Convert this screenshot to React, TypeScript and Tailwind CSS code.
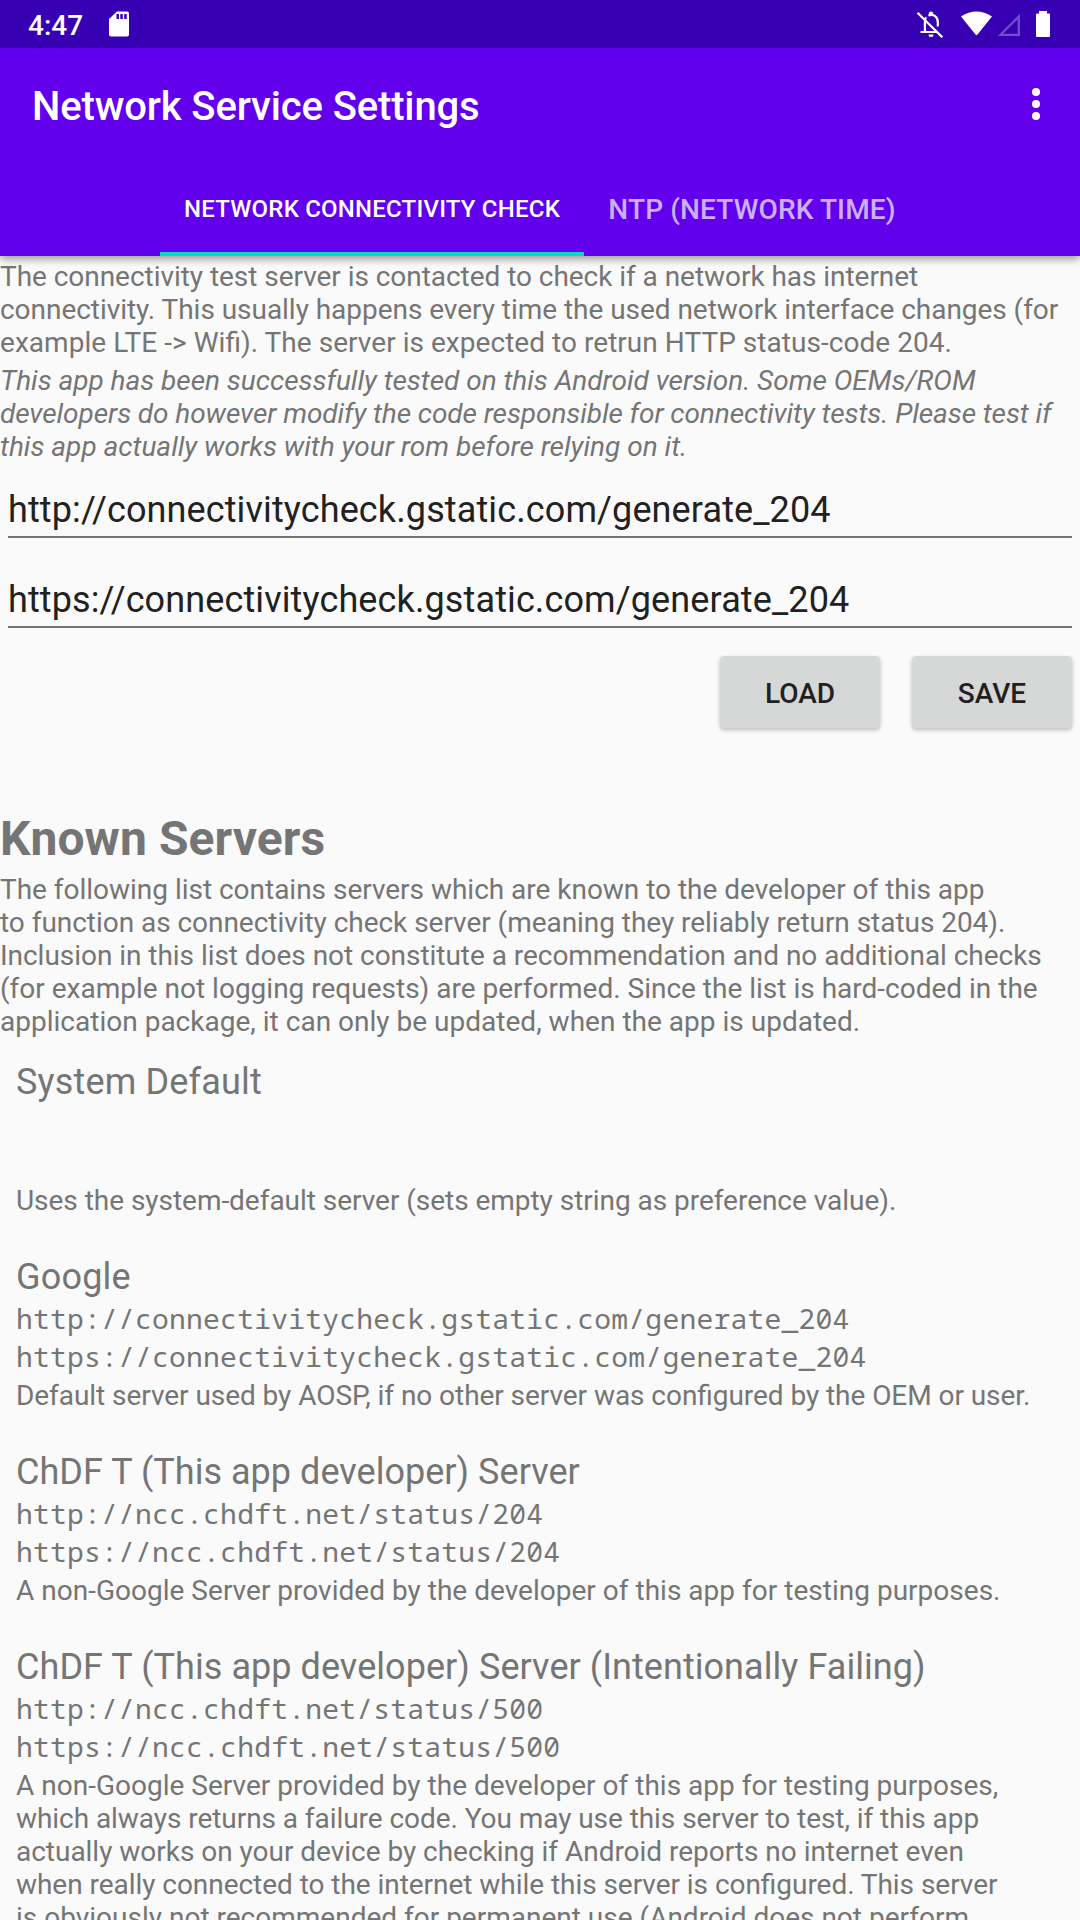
import React from "react";

type Line = [text: string, tracking: string];

function Lines({ t }: { t: Line[] }) {
  return (
    <>
      {t.map(([s, tracking]) => (
        <div key={s} className={`whitespace-pre ${tracking}`}>{s}</div>
      ))}
    </>
  );
}

type Entry = { name: Line; urls: string[]; desc: Line[] };

const servers: Entry[] = [
  {
    name: ["System Default", "tracking-[0.17px]"],
    urls: [],
    desc: [["Uses the system-default server (sets empty string as preference value).", "tracking-[-0.035px]"]],
  },
  {
    name: ["Google", "tracking-[0.2px]"],
    urls: ["http://connectivitycheck.gstatic.com/generate_204", "https://connectivitycheck.gstatic.com/generate_204"],
    desc: [["Default server used by AOSP, if no other server was configured by the OEM or user.", "tracking-[-0.055px]"]],
  },
  {
    name: ["ChDF T (This app developer) Server", "tracking-[0.03px]"],
    urls: ["http://ncc.chdft.net/status/204", "https://ncc.chdft.net/status/204"],
    desc: [["A non-Google Server provided by the developer of this app for testing purposes.", "tracking-[0.015px]"]],
  },
  {
    name: ["ChDF T (This app developer) Server (Intentionally Failing)", "tracking-[0.06px]"],
    urls: ["http://ncc.chdft.net/status/500", "https://ncc.chdft.net/status/500"],
    desc: [
      ["A non-Google Server provided by the developer of this app for testing purposes,", "tracking-[0.01px]"],
      ["which always returns a failure code. You may use this server to test, if this app", "tracking-[-0.06px]"],
      ["actually works on your device by checking if Android reports no internet even", "tracking-[-0.025px]"],
      ["when really connected to the internet while this server is configured. This server", "tracking-[-0.045px]"],
      ["is obviously not recommended for permanent use (Android does not perform", "tracking-normal"],
    ],
  },
];

function Server({ name, urls, desc }: Entry) {
  return (
    <section className="px-4 pb-[39px]">
      <h2 className="text-[36px] leading-[43px]">
        <Lines t={[name]} />
      </h2>
      <div className="h-[76px] font-['Noto_Sans_Mono','DejaVu_Sans_Mono',monospace] text-[28px] leading-[38px]">
        <Lines t={urls.map((u): Line => [u, "tracking-[0.21px]"])} />
      </div>
      <div className="pt-1">
        <Lines t={desc} />
      </div>
    </section>
  );
}

function Field({ value }: { value: string }) {
  return (
    <div className="mx-2 h-[90px]">
      <div className="h-[49px] whitespace-pre border-b-2 border-[#757575] text-[36px] leading-[42px] tracking-[0.12px] text-[#212121]">{value}</div>
    </div>
  );
}

function Button({ label }: { label: string }) {
  return (
    <button className="h-[72px] w-40 rounded-[4px] bg-[#d6d7d7] pt-0.5 text-[28px] font-medium text-[#212121] shadow-[0_2px_4px_rgba(0,0,0,0.25)]">
      {label}
    </button>
  );
}

function StatusIcons() {
  return (
    <svg width="160" height="48" viewBox="0 0 160 48" className="shrink-0 overflow-visible">
      <g fill="none" stroke="white" strokeWidth="2.2">
        <path d="M0.5 32H18M4.900 32V22C4.900 20 5.300 18.500 6 17.300M8.500 15.600C13.500 13.500 17.800 17 17.800 22V26.500" />
        <path d="M-2.500 12.800L22.300 37.200" />
      </g>
      <path d="M8.800 15.500V13.700a2.200 2.200 0 0 1 4.400 0V15.500ZM8.500 34.500h5a2.500 2.500 0 0 1-5 0Z" fill="white" />
      <path d="M41 16.500Q56.500 6.500 72 16.500L57.500 34.500Q56.500 36 55.500 34.500Z" fill="white" />
      <path d="M80.500 34.800H98.800V16.500Z" fill="none" stroke="white" strokeOpacity="0.3" strokeWidth="2.300" />
      <path d="M119 11h8v2.500h2a1 1 0 0 1 1 1V36a1 1 0 0 1-1 1h-12a1 1 0 0 1-1-1V14.500a1 1 0 0 1 1-1h2Z" fill="white" />
    </svg>
  );
}

export default function App() {
  return (
    <div className="h-[1920px] w-[1080px] overflow-hidden bg-[#fafafa] font-[Roboto,sans-serif] text-[28px] leading-[33px] text-[#757575] [font-feature-settings:'liga'_1]">
      <header className="relative h-[256px] bg-[#6200ee] text-white shadow-[0_3px_8px_rgba(0,0,0,0.4)]">
        <div className="flex h-12 items-center justify-between bg-[#3700b3] pl-7">
          <div className="flex items-center">
            <span className="pt-0.5 font-medium">4:47</span>
            <svg className="ml-[26px]" width="20" height="26" viewBox="0 0 20 26">
              <path d="M8 0.500H18a2 2 0 0 1 2 2v21a2 2 0 0 1-2 2H2a2 2 0 0 1-2-2V8Z" fill="white" />
              <path d="M7.500 3h2.500v5H7.500ZM11.300 3h2.500v5h-2.500ZM15.200 3h2.500v5h-2.500Z" fill="#3700b3" />
            </svg>
          </div>
          <StatusIcons />
        </div>
        <div className="flex h-[112px] items-center justify-between pl-8 pr-10">
          <h1 className="whitespace-pre pt-1 text-[40px] font-medium tracking-[-0.14px]">Network Service Settings</h1>
          <svg width="8" height="32" viewBox="0 0 8 32" fill="white">
            <circle cx="4" cy="4" r="4" />
            <circle cx="4" cy="16" r="4" />
            <circle cx="4" cy="28" r="4" />
          </svg>
        </div>
        <nav className="flex h-24 justify-center">
          <div className="flex w-[424px] items-center justify-center whitespace-pre border-b-4 border-[#03dac5] pt-1.5 text-[24px] font-medium tracking-[0.21px]">NETWORK CONNECTIVITY CHECK</div>
          <div className="flex w-[336px] items-center justify-center whitespace-pre pt-0.5 font-medium tracking-[0.13px] text-white/70">NTP (NETWORK TIME)</div>
        </nav>
      </header>
      <main className="pt-1">
        <Lines
          t={[
            ["The connectivity test server is contacted to check if a network has internet", "tracking-[-0.045px]"],
            ["connectivity. This usually happens every time the used network interface changes (for", "tracking-[-0.04px]"],
            ["example LTE -> Wifi). The server is expected to retrun HTTP status-code 204.", "tracking-[0.04px]"],
          ]}
        />
        <div className="mt-[5px] italic">
          <Lines
            t={[
              ["This app has been successfully tested on this Android version. Some OEMs/ROM", "tracking-[-0.03px]"],
              ["developers do however modify the code responsible for connectivity tests. Please test if", "tracking-[-0.08px]"],
              ["this app actually works with your rom before relying on it.", "tracking-normal"],
            ]}
          />
        </div>
        <div className="mt-[26px]">
          <Field value="http://connectivitycheck.gstatic.com/generate_204" />
          <Field value="https://connectivitycheck.gstatic.com/generate_204" />
        </div>
        <div className="-mt-[13px] flex justify-end gap-8 pr-2">
          <Button label="LOAD" />
          <Button label="SAVE" />
        </div>
        <h2 className="mt-[83px] text-[48px] font-bold leading-[56px] tracking-[0.09px]">Known Servers</h2>
        <div className="mb-[23px] mt-1.5">
          <Lines
            t={[
              ["The following list contains servers which are known to the developer of this app", "tracking-[-0.02px]"],
              ["to function as connectivity check server (meaning they reliably return status 204).", "tracking-[-0.04px]"],
              ["Inclusion in this list does not constitute a recommendation and no additional checks", "tracking-[-0.04px]"],
              ["(for example not logging requests) are performed. Since the list is hard-coded in the", "tracking-normal"],
              ["application package, it can only be updated, when the app is updated.", "tracking-[0.01px]"],
            ]}
          />
        </div>
        {servers.map((s) => (
          <Server key={s.name[0]} {...s} />
        ))}
      </main>
    </div>
  );
}
